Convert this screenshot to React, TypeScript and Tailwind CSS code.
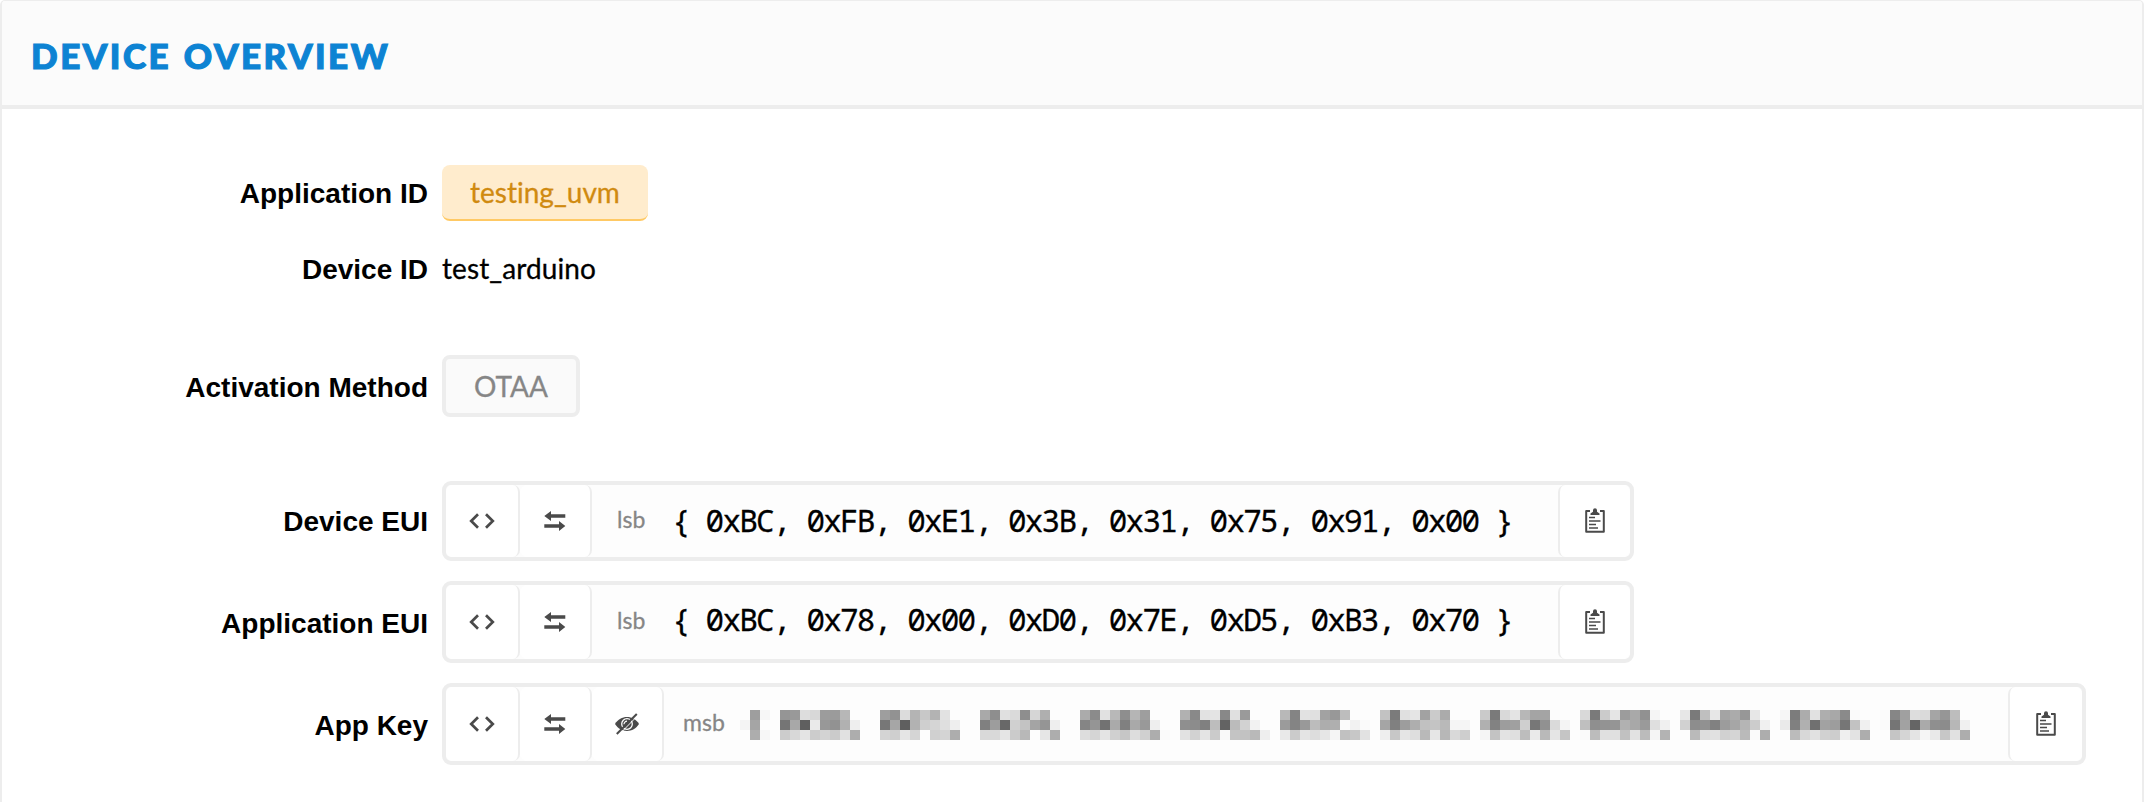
import type { ReactNode } from "react";

const mosaicRows = [
  "fd9ef7 fd 9599ddd89c9bb7fdfdfd 9e92dcb4c8b3e2fdfdfd a98ee0da8ed6affdfdfd ab8be1b88eb59efdfdfd b189e2e488e09afdfdfd b884e2e0a298bdfdfdfd c27be0e5a2cbabfdfdfd ca7ad9e4b7a4a4fcfdfd d97acbe59ca991f5fdfd e77abfe7a4ab97e7fdfd f67cace1aea88afafdfd fb86a0dddaa596bdfd",
  "f4a5fd fd 75a85fea9892b1eefdfd 77a65fb2cfd5dfeefdfd 809d68d0c3a495eefdfd 859572aa80a999eefdfd 8f8c80bd63bbd2f2fdfd 9b8499bcadaffbf2fafd a5809daec1c4b9f5f5fd b0829da0cf7791daf4fd bf8f9395b1a89adff0fd d18d91819ca6b5ccf0fd ea80b070a29d76c2f0fd fa75a265aa8f8cb7f0",
  "fdadf7 fd ccd8e4ccd3cbe1adfdfd d4cfe5d5fdd0d4adfdfd d9d9e5cbb8fde6adfdfd ddd5e4d0c6ddd0adfafd e2d2e4cbf9c4c2b9eefd e9cbe4dde6f5c1c7e2fd eec7e5deb9e6b7d9cefd f5c3e3dfbdeab9e5c5fd fabce0e0c1e2bbf5b3fd fdbadee1d1d5bafaadfd fdbbd8e1d1cdefe3adfd fdc5d5e4f5e9c7e1ad",
].map((row) => row.replace(/ /g, "").match(/../g) ?? []);

function Mosaic() {
  return (
    <svg width="1230" height="30" viewBox="0 0 123 3" shapeRendering="crispEdges" className="mt-[2px] ml-[1px] shrink-0">
      {mosaicRows.map((row, y) =>
        row.map((v, x) =>
          v === "fd" ? null : <rect key={`${x}-${y}`} x={x} y={y} width="1" height="1" fill={`#${v}${v}${v}`} />,
        ),
      )}
    </svg>
  );
}

function CodeIcon() {
  return (
    <svg width="26" height="16" viewBox="0 0 26 16" fill="none" stroke="#4a4a4a" strokeWidth="2.7">
      <path d="M9 1.2 2.2 8 9 14.8M17 1.2 23.8 8 17 14.8" />
    </svg>
  );
}

function SwapIcon() {
  return (
    <svg width="22" height="20" viewBox="0 0 22 20" fill="#4a4a4a">
      <path d="M0.3 5 7 0V3.3H21.3V6.7H7V10ZM21.3 15 15 10V13.3H0.3V16.7H15V20Z" />
    </svg>
  );
}

function EyeOffIcon() {
  return (
    <svg width="26" height="22" viewBox="0 0 26 22" fill="none">
      <path d="M1 11C6.500 1.800 19.500 1.800 25 11 19.500 20.200 6.500 20.200 1 11Z" fill="#4a4a4a" />
      <circle cx="13" cy="11" r="5.300" stroke="#fff" strokeWidth="1.300" />
      <path d="M13 8.200a3 3 0 0 0-3 3" stroke="#fff" strokeWidth="1.200" />
      <path d="M4.500 22.200 24.300 2" stroke="#fff" strokeWidth="1" />
      <path d="M2.800 21 22.800 1" stroke="#4a4a4a" strokeWidth="2" />
    </svg>
  );
}

function ClipboardIcon() {
  return (
    <svg width="20" height="25" viewBox="0 0 20 25" fill="none" stroke="#4a4a4a" className="mt-[-1px]">
      <path d="M5 3H1.200V23.800H18.800V3H15" strokeWidth="2" strokeLinejoin="round" />
      <path d="M5.500 7V5.500L8 3.700V2.200a2 2 0 0 1 4 0V3.700l2.500 1.800V7Z" fill="#4a4a4a" stroke="none" />
      <path d="M4 9.500H10M4 13H15.500M4 16.500H11M4 20H13" strokeWidth="1.600" />
    </svg>
  );
}

function LeftButton({ children, className }: { children: ReactNode; className: string }) {
  return (
    <button className={`flex shrink-0 items-center justify-center rounded-[7px] border-r-2 border-[#ededed] bg-white ${className}`}>
      {children}
    </button>
  );
}

function Row({ label, className, nudge, children }: { label: string; className: string; nudge?: boolean; children: ReactNode }) {
  return (
    <div className={`flex items-center gap-[14px] ${className}`}>
      <div className={`w-[426px] shrink-0 text-right text-[28px] leading-[32px] font-bold ${nudge ? "pt-[3px]" : "pt-[1px]"}`}>{label}</div>
      {children}
    </div>
  );
}

function KeyField({ order, hidden, className, children }: { order: string; hidden?: boolean; className: string; children: ReactNode }) {
  return (
    <div className={`flex shrink-0 rounded-[9px] border-4 border-[#ededed] bg-[#fdfdfd] ${className}`}>
      <LeftButton className="w-[74px]"><CodeIcon /></LeftButton>
      <LeftButton className="w-[72px]"><SwapIcon /></LeftButton>
      {hidden && <LeftButton className="w-[72px]"><EyeOffIcon /></LeftButton>}
      <div className={`flex grow items-center ${hidden ? "pl-[19px]" : "pl-[25px]"}`}>
        <span className={`mt-[-5px] shrink-0 font-['Lato',sans-serif] text-[23px] leading-[30px] text-[#868686] [-webkit-text-stroke:0.3px_#868686] ${hidden ? "w-[56px]" : "w-[55px]"}`}>{order}</span>
        {children}
      </div>
      <button className={`flex shrink-0 items-center justify-center rounded-[7px] border-l-2 border-[#ededed] bg-white ${hidden ? "w-[74px]" : "w-[72px]"}`}>
        <ClipboardIcon />
      </button>
    </div>
  );
}

function Bytes({ children, className }: { children: string; className: string }) {
  return (
    <span className={`font-['Noto_Sans_Mono','DejaVu_Sans_Mono',monospace] text-[31px] leading-[36px] tracking-[-1.8px] whitespace-pre [-webkit-text-stroke:0.3px_#000] ${className}`}>
      {children}
    </span>
  );
}

export default function App() {
  return (
    <div className="h-[802px] w-full overflow-hidden rounded-t-[5px] border-x-2 border-t border-[#ededed] bg-white font-['Liberation_Sans',sans-serif] text-black [font-variant-ligatures:none]">
      <header className="flex h-[108px] items-center border-b-4 border-[#ededed] bg-[#fbfbfb] pl-[29px]">
        <h1 className="pt-[3px] font-['Lato',sans-serif] text-[35px] leading-[44px] font-black tracking-[2.5px] text-[#0d83d3] [-webkit-text-stroke:1.2px_#0d83d3] [word-spacing:2px]">
          DEVICE OVERVIEW
        </h1>
      </header>
      <main className="flex flex-col pt-[56px]">
        <Row label="Application ID" className="h-[56px]">
          <span className="flex h-[56px] w-[206px] items-center justify-center rounded-[8px] border-b-2 border-[#ffc964] bg-[#ffeccd] font-['Lato',sans-serif] text-[28px] text-[#d08a10] [-webkit-text-stroke:0.3px_#d08a10]">
            testing_uvm
          </span>
        </Row>
        <Row label="Device ID" className="mt-[20px] h-[56px]">
          <span className="pb-[2px] font-['Lato',sans-serif] text-[28px] tracking-[0.1px] [-webkit-text-stroke:0.3px_#000]">test_arduino</span>
        </Row>
        <Row label="Activation Method" className="mt-[58px] h-[62px]" nudge>
          <span className="flex h-[62px] w-[138px] items-center justify-center rounded-[8px] border-4 border-[#ededed] bg-[#fafafa] font-['Lato',sans-serif] text-[28px] text-[#868686] [-webkit-text-stroke:0.3px_#868686]">
            OTAA
          </span>
        </Row>
        <Row label="Device EUI" className="mt-[64px] h-[80px]">
          <KeyField order="lsb" className="h-[80px] w-[1192px]">
            <Bytes className="mt-[-3px]">{"{ 0xBC, 0xFB, 0xE1, 0x3B, 0x31, 0x75, 0x91, 0x00 }"}</Bytes>
          </KeyField>
        </Row>
        <Row label="Application EUI" className="mt-[20px] h-[82px]" nudge>
          <KeyField order="lsb" className="h-[82px] w-[1192px]">
            <Bytes className="mt-[-6px]">{"{ 0xBC, 0x78, 0x00, 0xD0, 0x7E, 0xD5, 0xB3, 0x70 }"}</Bytes>
          </KeyField>
        </Row>
        <Row label="App Key" className="mt-[20px] h-[82px]" nudge>
          <KeyField order="msb" hidden className="h-[82px] w-[1644px]">
            <Mosaic />
          </KeyField>
        </Row>
      </main>
    </div>
  );
}
